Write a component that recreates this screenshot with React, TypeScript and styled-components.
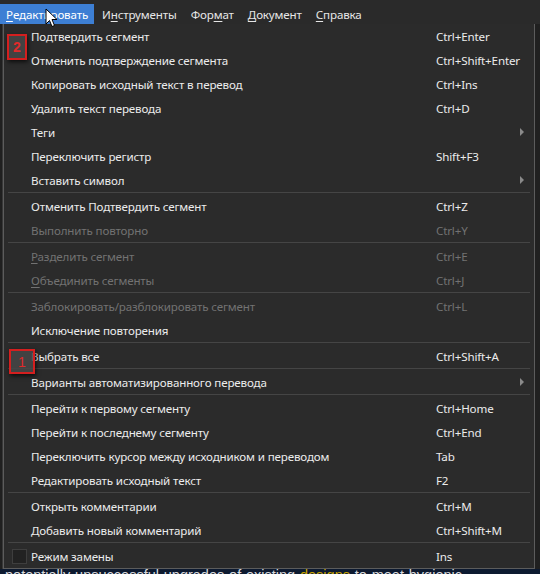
import styled, { createGlobalStyle } from 'styled-components'

const GlobalStyle = createGlobalStyle`
  html, body {
    margin: 0;
    padding: 0;
    background: #1c1c1c;
  }
  body {
    font-family: "Noto Sans", "Liberation Sans", sans-serif;
  }
`

type Entry =
  | { kind: 'sep' }
  | {
      kind: 'item'
      label: string
      shortcut?: string
      disabled?: boolean
      submenu?: boolean
      check?: boolean
      mnemonic?: number
    }

const entries: Entry[] = [
  { kind: 'item', label: 'Подтвердить сегмент', shortcut: 'Ctrl+Enter' },
  { kind: 'item', label: 'Отменить подтверждение сегмента', shortcut: 'Ctrl+Shift+Enter' },
  { kind: 'item', label: 'Копировать исходный текст в перевод', shortcut: 'Ctrl+Ins' },
  { kind: 'item', label: 'Удалить текст перевода', shortcut: 'Ctrl+D' },
  { kind: 'item', label: 'Теги', submenu: true },
  { kind: 'item', label: 'Переключить регистр', shortcut: 'Shift+F3' },
  { kind: 'item', label: 'Вставить символ', submenu: true },
  { kind: 'sep' },
  { kind: 'item', label: 'Отменить Подтвердить сегмент', shortcut: 'Ctrl+Z' },
  { kind: 'item', label: 'Выполнить повторно', shortcut: 'Ctrl+Y', disabled: true },
  { kind: 'sep' },
  { kind: 'item', label: 'Разделить сегмент', shortcut: 'Ctrl+E', disabled: true, mnemonic: 0 },
  { kind: 'item', label: 'Объединить сегменты', shortcut: 'Ctrl+J', disabled: true, mnemonic: 0 },
  { kind: 'sep' },
  { kind: 'item', label: 'Заблокировать/разблокировать сегмент', shortcut: 'Ctrl+L', disabled: true },
  { kind: 'item', label: 'Исключение повторения' },
  { kind: 'sep' },
  { kind: 'item', label: 'Выбрать все', shortcut: 'Ctrl+Shift+A' },
  { kind: 'sep' },
  { kind: 'item', label: 'Варианты автоматизированного перевода', submenu: true },
  { kind: 'sep' },
  { kind: 'item', label: 'Перейти к первому сегменту', shortcut: 'Ctrl+Home' },
  { kind: 'item', label: 'Перейти к последнему сегменту', shortcut: 'Ctrl+End' },
  { kind: 'item', label: 'Переключить курсор между исходником и переводом', shortcut: 'Tab' },
  { kind: 'item', label: 'Редактировать исходный текст', shortcut: 'F2' },
  { kind: 'sep' },
  { kind: 'item', label: 'Открыть комментарии', shortcut: 'Ctrl+M' },
  { kind: 'item', label: 'Добавить новый комментарий', shortcut: 'Ctrl+Shift+M' },
  { kind: 'sep' },
  { kind: 'item', label: 'Режим замены', shortcut: 'Ins', check: true },
]

const topMenus = [
  { label: 'Редактировать', mnemonic: 0, active: true },
  { label: 'Инструменты', mnemonic: 1 },
  { label: 'Формат', mnemonic: 3 },
  { label: 'Документ', mnemonic: 0 },
  { label: 'Справка', mnemonic: 0 },
]

const Screen = styled.div`
  position: relative;
  width: 540px;
  height: 574px;
  overflow: hidden;
  display: flex;
  flex-direction: column;
  background: #1c1c1c;
  font-size: 11.6px;
  letter-spacing: -0.15px;
  color: #ececec;
`

const MenuBar = styled.div`
  height: 24px;
  flex-shrink: 0;
  display: flex;
  align-items: flex-end;
  background: #2a2a2a;
  position: relative;
  z-index: 1;
`

const TopItem = styled.div<{ $active?: boolean }>`
  height: 20px;
  display: flex;
  align-items: center;
  padding: 0 6px;
  margin-right: 2px;
  color: ${(p) => (p.$active ? '#ffffff' : '#e6e6e6')};
  background: ${(p) => (p.$active ? '#3d7fd4' : 'transparent')};
`

const Mnemonic = styled.span`
  text-decoration: underline;
  text-underline-offset: 2px;
`

const Middle = styled.div`
  display: flex;
  flex-shrink: 0;
  margin-top: -1px;
`

const SideStrip = styled.div<{ $w: number }>`
  width: ${(p) => p.$w}px;
  flex-shrink: 0;
  background: #202020;
  border-right: ${(p) => (p.$w === 3 ? '1px solid #3a3a3a' : 'none')};
  box-sizing: border-box;
`

const Panel = styled.div`
  flex: 1;
  background: #2b2b2b;
  border: 1px solid #5c5c5c;
  display: flex;
  flex-direction: column;
  box-shadow: 2px 2px 3px rgba(0, 0, 0, 0.5);
`

const Row = styled.div<{ $disabled?: boolean }>`
  height: 24px;
  flex-shrink: 0;
  display: grid;
  grid-template-columns: 27px 405px 1fr 14px;
  align-items: center;
  color: ${(p) => (p.$disabled ? '#727272' : '#ececec')};
`

const IconCell = styled.div`
  display: flex;
  justify-content: center;
  padding-left: 2px;
`

const CheckBox = styled.div`
  width: 15px;
  height: 15px;
  box-sizing: border-box;
  background: #222222;
  border: 1px solid #3e3e3e;
  margin-left: 2px;
`

const Label = styled.div`
  white-space: nowrap;
`

const Shortcut = styled.div`
  white-space: nowrap;
`

const Arrow = styled.div`
  width: 0;
  height: 0;
  border-top: 4px solid transparent;
  border-bottom: 4px solid transparent;
  border-left: 4px solid #8a8a8a;
`

const Separator = styled.div`
  height: 2px;
  flex-shrink: 0;
  margin: 0 4px 0 4px;
  border-top: 1px solid #454545;
  box-sizing: border-box;
`

const DocStrip = styled.div`
  flex: 1;
  background: #0d1a30;
  overflow: hidden;
  padding-left: 5px;
`

const DocText = styled.div`
  font-family: "Liberation Sans", sans-serif;
  font-size: 14.5px;
  line-height: 14px;
  margin-top: -1px;
  white-space: nowrap;
  color: #d9d9dc;
  letter-spacing: 0;
`

const Hl = styled.span`
  color: #c9a400;
`

const Badge = styled.div<{ $x: number; $y: number; $w: number; $h: number }>`
  position: absolute;
  left: ${(p) => p.$x}px;
  top: ${(p) => p.$y}px;
  width: ${(p) => p.$w}px;
  height: ${(p) => p.$h}px;
  box-sizing: border-box;
  border: 2px solid #d41f1f;
  background: rgba(70, 70, 70, 0.85);
  box-shadow: 1px 2px 4px rgba(0, 0, 0, 0.7);
  color: #e02a2a;
  font-family: "Liberation Sans", sans-serif;
  font-size: 14px;
  letter-spacing: 0;
  display: flex;
  align-items: center;
  justify-content: center;
  z-index: 2;
`

const Pointer = styled.svg`
  position: absolute;
  left: 45px;
  top: 8px;
  z-index: 2;
`

function withMnemonic(label: string, idx?: number) {
  if (idx === undefined) return label
  return (
    <>
      {label.slice(0, idx)}
      <Mnemonic>{label[idx]}</Mnemonic>
      {label.slice(idx + 1)}
    </>
  )
}

export default function App() {
  return (
    <>
      <GlobalStyle />
      <Screen>
        <MenuBar>
          {topMenus.map((m) => (
            <TopItem key={m.label} $active={m.active}>
              {withMnemonic(m.label, m.mnemonic)}
            </TopItem>
          ))}
        </MenuBar>
        <Middle>
          <SideStrip $w={3} />
          <Panel>
            {entries.map((e, i) =>
              e.kind === 'sep' ? (
                <Separator key={i} />
              ) : (
                <Row key={i} $disabled={e.disabled}>
                  <IconCell>{e.check && <CheckBox />}</IconCell>
                  <Label>{withMnemonic(e.label, e.mnemonic)}</Label>
                  <Shortcut>{e.shortcut}</Shortcut>
                  {e.submenu ? <Arrow /> : <span />}
                </Row>
              )
            )}
          </Panel>
          <SideStrip $w={5} />
        </Middle>
        <DocStrip>
          <DocText>
            potentially·unsuccessful·upgrades·of·existing·<Hl>designs</Hl>·to·meet·hygienic·
          </DocText>
        </DocStrip>

        <Badge $x={7} $y={34} $w={20} $h={26} style={{ fontWeight: 'bold' }}>2</Badge>
        <Badge $x={9} $y={349} $w={26} $h={25}>1</Badge>

        <Pointer width="14" height="20" viewBox="0 0 14 20">
          <path
            d="M1 1 L1 16 L4.5 12.5 L7 18.5 L9.5 17.5 L7 11.5 L12 11.5 Z"
            fill="#ffffff"
            stroke="#000000"
            strokeWidth="1"
            strokeLinejoin="round"
          />
        </Pointer>
      </Screen>
    </>
  )
}
